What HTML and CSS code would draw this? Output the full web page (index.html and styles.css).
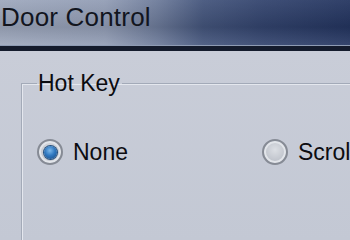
FILE: index.html
```html
<!DOCTYPE html>
<html>
<head>
<meta charset="utf-8">
<link rel="stylesheet" href="styles.css">
</head>
<body>
<div class="window">
  <div class="titlebar"><span class="title">Door Control</span></div>
  <div class="sep"></div>
  <div class="client">
    <fieldset class="group">
      <legend class="legend">Hot Key</legend>
      <div class="options">
        <label class="opt"><span class="radio checked"><span class="dot"></span></span><span class="label">None</span></label>
        <label class="opt"><span class="radio"></span><span class="label">Scroll Lock</span></label>
      </div>
    </fieldset>
  </div>
</div>
</body>
</html>
```
FILE: styles.css
```css
html, body {
  margin: 0;
  padding: 0;
  width: 350px;
  height: 240px;
  overflow: hidden;
  background: #c5cad6;
}
.window {
  width: 350px;
  height: 240px;
  overflow: hidden;
  font-family: "Liberation Sans", Arial, sans-serif;
  color: #0c0c10;
}
.titlebar {
  height: 45px;
  background:
    linear-gradient(180deg, rgba(255,255,255,0.06) 0%, rgba(0,0,0,0.10) 60%, rgba(255,255,255,0.08) 100%),
    linear-gradient(90deg, #9ea8bd 0%, #929db5 30%, #6d7b9a 45%, #44557c 58%, #33446e 75%, #243560 100%);
  display: flex;
  align-items: flex-start;
}
.title {
  font-size: 26px;
  line-height: 30px;
  padding-top: 2px;
  padding-left: 1px;
  color: #12151e;
  letter-spacing: 0.2px;
}
.sep {
  height: 5px;
  border-top: 1px solid #8e9bb3;
  background: #141b2c;
}
.client {
  height: 190px;
  background: linear-gradient(180deg, #c9cdd8 0%, #c3c8d4 100%);
  padding-top: 20px;
  padding-left: 21px;
  box-sizing: border-box;
}
.group {
  margin: 0;
  width: 420px;
  height: 260px;
  box-sizing: border-box;
  border: 0;
  border-top: 1px solid #a3aab8;
  border-left: 1px solid #a3aab8;
  box-shadow: inset 1px 1px 0 #e4e7ee;
  padding: 0 0 0 15px;
}
.legend {
  font-size: 23px;
  line-height: 24px;
  padding: 0 2px 0 1px;
}
.options {
  display: flex;
  padding-top: 44px;
}
.opt {
  display: flex;
  align-items: center;
  width: 225px;
  flex-shrink: 0;
  font-size: 23px;
}
.radio {
  width: 26px;
  height: 26px;
  box-sizing: border-box;
  border-radius: 50%;
  background: radial-gradient(circle at 50% 40%, #dcdfe4 0%, #c2c6ce 60%, #a9aeb8 100%);
  border: 2px solid #868b95;
  box-shadow: inset 0 0 0 2px #e2e5ea;
  display: flex;
  align-items: center;
  justify-content: center;
  margin-right: 10px;
  flex-shrink: 0;
}
.dot {
  width: 13px;
  height: 13px;
  border-radius: 50%;
  background: radial-gradient(circle at 45% 35%, #7cb8ea 0%, #2f78c0 45%, #164680 100%);
  box-shadow: 0 0 0 1px #24507f;
}
.label {
  line-height: 26px;
  white-space: nowrap;
}
```
